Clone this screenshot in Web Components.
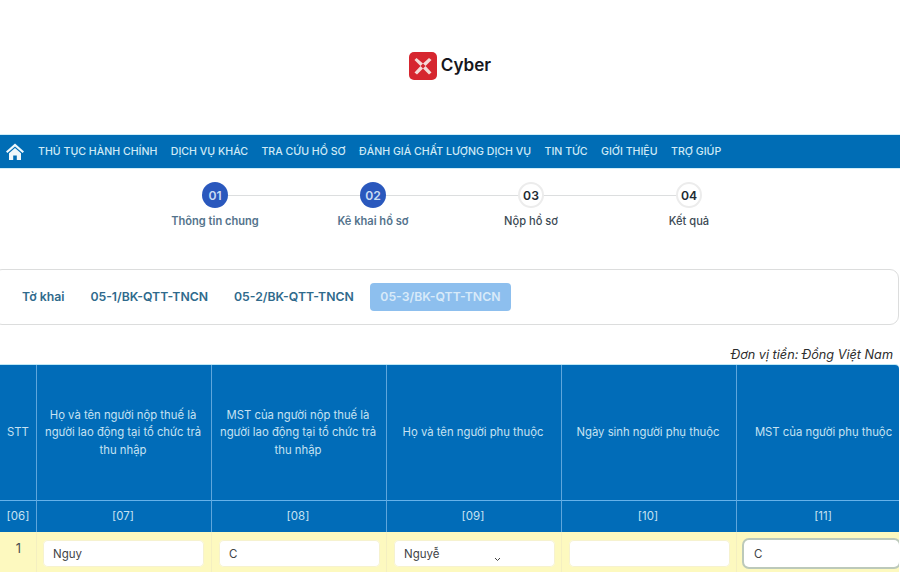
<!DOCTYPE html>
<html lang="vi">
<head>
<meta charset="utf-8">
<title>Kê khai hồ sơ</title>
<style>
  html, body { margin: 0; background: #fff; }
  body { font-family: Inter, "Liberation Sans", sans-serif; overflow: hidden; height: 579px; }
</style>
</head>
<body>
<site-logo></site-logo>
<main-nav>
  <a>THỦ TỤC HÀNH CHÍNH</a>
  <a>DỊCH VỤ KHÁC</a>
  <a>TRA CỨU HỒ SƠ</a>
  <a>ĐÁNH GIÁ CHẤT LƯỢNG DỊCH VỤ</a>
  <a>TIN TỨC</a>
  <a>GIỚI THIỆU</a>
  <a>TRỢ GIÚP</a>
</main-nav>
<step-bar>
  <step-item num="01" done>Thông tin chung</step-item>
  <step-item num="02" done>Kê khai hồ sơ</step-item>
  <step-item num="03">Nộp hồ sơ</step-item>
  <step-item num="04" last>Kết quả</step-item>
</step-bar>
<form-tabs>
  <tab-item>Tờ khai</tab-item>
  <tab-item>05-1/BK-QTT-TNCN</tab-item>
  <tab-item>05-2/BK-QTT-TNCN</tab-item>
  <tab-item active>05-3/BK-QTT-TNCN</tab-item>
</form-tabs>
<unit-note>Đơn vị tiền: Đồng Việt Nam</unit-note>
<dep-table>
  <head-cell>STT</head-cell>
  <head-cell>Họ và tên người nộp thuế là người lao động tại tổ chức trả thu nhập</head-cell>
  <head-cell>MST của người nộp thuế là người lao động tại tổ chức trả thu nhập</head-cell>
  <head-cell>Họ và tên người phụ thuộc</head-cell>
  <head-cell>Ngày sinh người phụ thuộc</head-cell>
  <head-cell>MST của người phụ thuộc</head-cell>

  <head-cell code>[06]</head-cell>
  <head-cell code>[07]</head-cell>
  <head-cell code>[08]</head-cell>
  <head-cell code>[09]</head-cell>
  <head-cell code>[10]</head-cell>
  <head-cell code>[11]</head-cell>

  <row-cell num>1</row-cell>
  <row-cell><text-box>Nguy</text-box></row-cell>
  <row-cell><text-box>C</text-box></row-cell>
  <row-cell><text-box select>Nguyễ</text-box></row-cell>
  <row-cell><text-box></text-box></row-cell>
  <row-cell><text-box focus>C</text-box></row-cell>
</dep-table>

<script>
// small helper: every element below is just a template string in an open shadow root
function define(name, html) {
  customElements.define(name, class extends HTMLElement {
    connectedCallback() {
      if (this.shadowRoot) return;
      const root = this.attachShadow({ mode: "open" });
      root.innerHTML = typeof html === "function" ? html(this) : html;
    }
  });
}

define("site-logo", `
  <style>
    :host { display: flex; justify-content: center; align-items: center; gap: 4px; height: 135px; padding: 0 0 4px; box-sizing: border-box; }
    svg { display: block; width: 28px; height: 28px; }
    span { font: 600 17.1px/28px Inter, "Liberation Sans", sans-serif; color: #16161c; margin-bottom: 2px; }
  </style>
  <svg viewBox="0 0 28 28">
    <rect width="28" height="28" rx="5" fill="#d6262f"/>
    <path d="M7.5 6 L14 11.5 L20 6 L22.5 8 L16.5 14 L22.5 20.5 L20 22.5 L14 16.5 L8 22.5 L5.5 20.5 L11.5 14 L5.5 8 Z" fill="#f4dcd8"/>
    <path d="M14 11.5 L16.5 14 L14 16.5 L11.5 14 Z" fill="#d6262f"/>
  </svg>
  <span>Cyber</span>`);

define("main-nav", `
  <style>
    :host { display: flex; align-items: center; height: 33px; background: #006db5; padding-left: 6px; box-sizing: border-box; box-shadow: 0 -1px 0 #cfeef8, 0 1px 0 #cfeef8; }
    svg { width: 18px; height: 17px; margin-right: 14px; flex: none; }
    nav { display: flex; gap: 13.4px; }
    ::slotted(a) { font: 500 10.6px/33px Inter, "Liberation Sans", sans-serif; color: #cfeaf6; white-space: nowrap; }
  </style>
  <svg viewBox="0 0 18 17">
    <path d="M9 0.5 L18 8.6 L16.6 10 L9 3.4 L1.4 10 L0 8.6 Z" fill="#eef7fb"/>
    <path d="M3 10.2 L9 5 L15 10.2 V17 H10.8 V12.5 H7.2 V17 H3 Z" fill="#eef7fb"/>
  </svg>
  <nav><slot></slot></nav>`);

define("step-bar", `
  <style>
    :host { display: flex; justify-content: flex-start; padding: 14px 0 0 136px; height: 101px; box-sizing: border-box; }
  </style>
  <slot></slot>`);

define("step-item", el => {
  const done = el.hasAttribute("done");
  const last = el.hasAttribute("last");
  return `
  <style>
    :host { display: flex; flex-direction: column; align-items: center; width: 158px; position: relative; }
    .dot { width: 26px; height: 26px; border-radius: 50%; display: flex; align-items: center; justify-content: center;
      font: 600 12.2px Inter, "Liberation Sans", sans-serif; position: relative; z-index: 1; box-sizing: border-box;
      background: ${done ? "#2a58bd" : "#fff"}; color: ${done ? "#c9dcf4" : "#222b33"};
      border: ${done ? "0" : "2px solid #ececec"}; }
    .line { position: absolute; left: 79px; top: 12.5px; width: 158px; height: 1.5px; background: #dcdedf; display: ${last ? "none" : "block"}; }
    .label { margin-top: 6px; font: ${done ? "600" : "500"} 11.1px/14px Inter, "Liberation Sans", sans-serif; color: ${done ? "#54738c" : "#3c4a54"}; white-space: nowrap; }
  </style>
  <div class="line"></div>
  <div class="dot">${el.getAttribute("num")}</div>
  <div class="label"><slot></slot></div>`;
});

define("form-tabs", `
  <style>
    :host { display: flex; align-items: center; gap: 0; height: 56px; width: 906px; margin-left: -7px; border: 1px solid #dcdddd; border-radius: 9px; box-sizing: border-box; padding-left: 17px; background: #fff; }
  </style>
  <slot></slot>`);

define("tab-item", el => {
  const active = el.hasAttribute("active");
  return `
  <style>
    :host { display: block; }
    div { font: 600 12.25px/28px Inter, "Liberation Sans", sans-serif; white-space: nowrap; border-radius: 4px;
      padding: 0 10px 0 ${active ? "10px" : "11px"}; margin: 0 ${active ? "0" : "5px"} 0 ${active ? "1.5px" : "0"};
      color: ${active ? "#d8eaf9" : "#2f6a8c"}; background: ${active ? "#8dbfee" : "transparent"}; }
  </style>
  <div><slot></slot></div>`;
});

define("unit-note", `
  <style>
    :host { display: block; height: 40px; padding: 22px 7px 0 0; box-sizing: border-box; text-align: right; font: italic 400 12.7px/16px Inter, "Liberation Sans", sans-serif; color: #2d2d2d; }
  </style>
  <slot></slot>`);

define("dep-table", `
  <style>
    :host { display: grid; grid-template-columns: 37px 175px 175px 175px 175px 162px; grid-template-rows: 135px 32px 40px; width: 899px; border-top-right-radius: 4px; overflow: hidden; box-shadow: 0 -1px 0 #bfe8f6; }
  </style>
  <slot></slot>`);

define("head-cell", el => `
  <style>
    :host { display: flex; align-items: center; justify-content: center; text-align: center; box-sizing: border-box; background: #016cb8; color: #c6e2f2;
      border-right: 1px solid #5fa6dc; ${el.hasAttribute("code") ? "border-top: 1px solid #66b2ea; padding: 0 2px 0 0;" : "padding: 1px 7px 0 5px;"}
      font: 400 ${el.hasAttribute("code") ? "11.5px" : "11.3px"}/17.5px Inter, "Liberation Sans", sans-serif; }
    :host(:nth-child(1)), :host(:nth-child(7)) { padding-left: 0; padding-right: 0; }
    :host(:nth-child(6)) { border-right: 0; padding: 1px 0 0 11px; }
    :host(:nth-child(12)) { border-right: 0; padding-left: 10px; padding-right: 0; }
  </style>
  <slot></slot>`);

define("row-cell", el => `
  <style>
    :host { display: flex; box-sizing: border-box; background: #fdf9bf; border-right: 1px solid #f4efc0; padding: 8px 6px 5px 7px; color: #4a4f52;
      ${el.hasAttribute("num") ? "justify-content: center; padding-top: 6px; font: 400 13px/20px Inter, 'Liberation Sans', sans-serif;" : ""} }
    :host(:nth-child(14)) { padding-left: 6px; padding-right: 7px; }
    :host(:last-of-type) { border-right: 0; padding-right: 0; }
  </style>
  <slot></slot>`);

define("text-box", el => `
  <style>
    :host { display: flex; align-items: center; position: relative; flex: 1; background: #fff; border-radius: 5px; box-sizing: border-box; padding-left: 10px;
      font: 400 11.5px Inter, "Liberation Sans", sans-serif; color: #3f4447; box-shadow: inset 0 0 0 1px #f6f2cf;
      ${el.hasAttribute("focus") ? "box-shadow: 0 0 0 2px #bcc9ba;" : ""} }
    svg { position: absolute; right: 54px; bottom: 5px; width: 7px; height: 5px; display: ${el.hasAttribute("select") ? "block" : "none"}; }
  </style>
  <slot></slot>
  <svg viewBox="0 0 7 5"><path d="M1 1 L3.5 3.5 L6 1" fill="none" stroke="#444" stroke-width="1"/></svg>`);
</script>
</body>
</html>
